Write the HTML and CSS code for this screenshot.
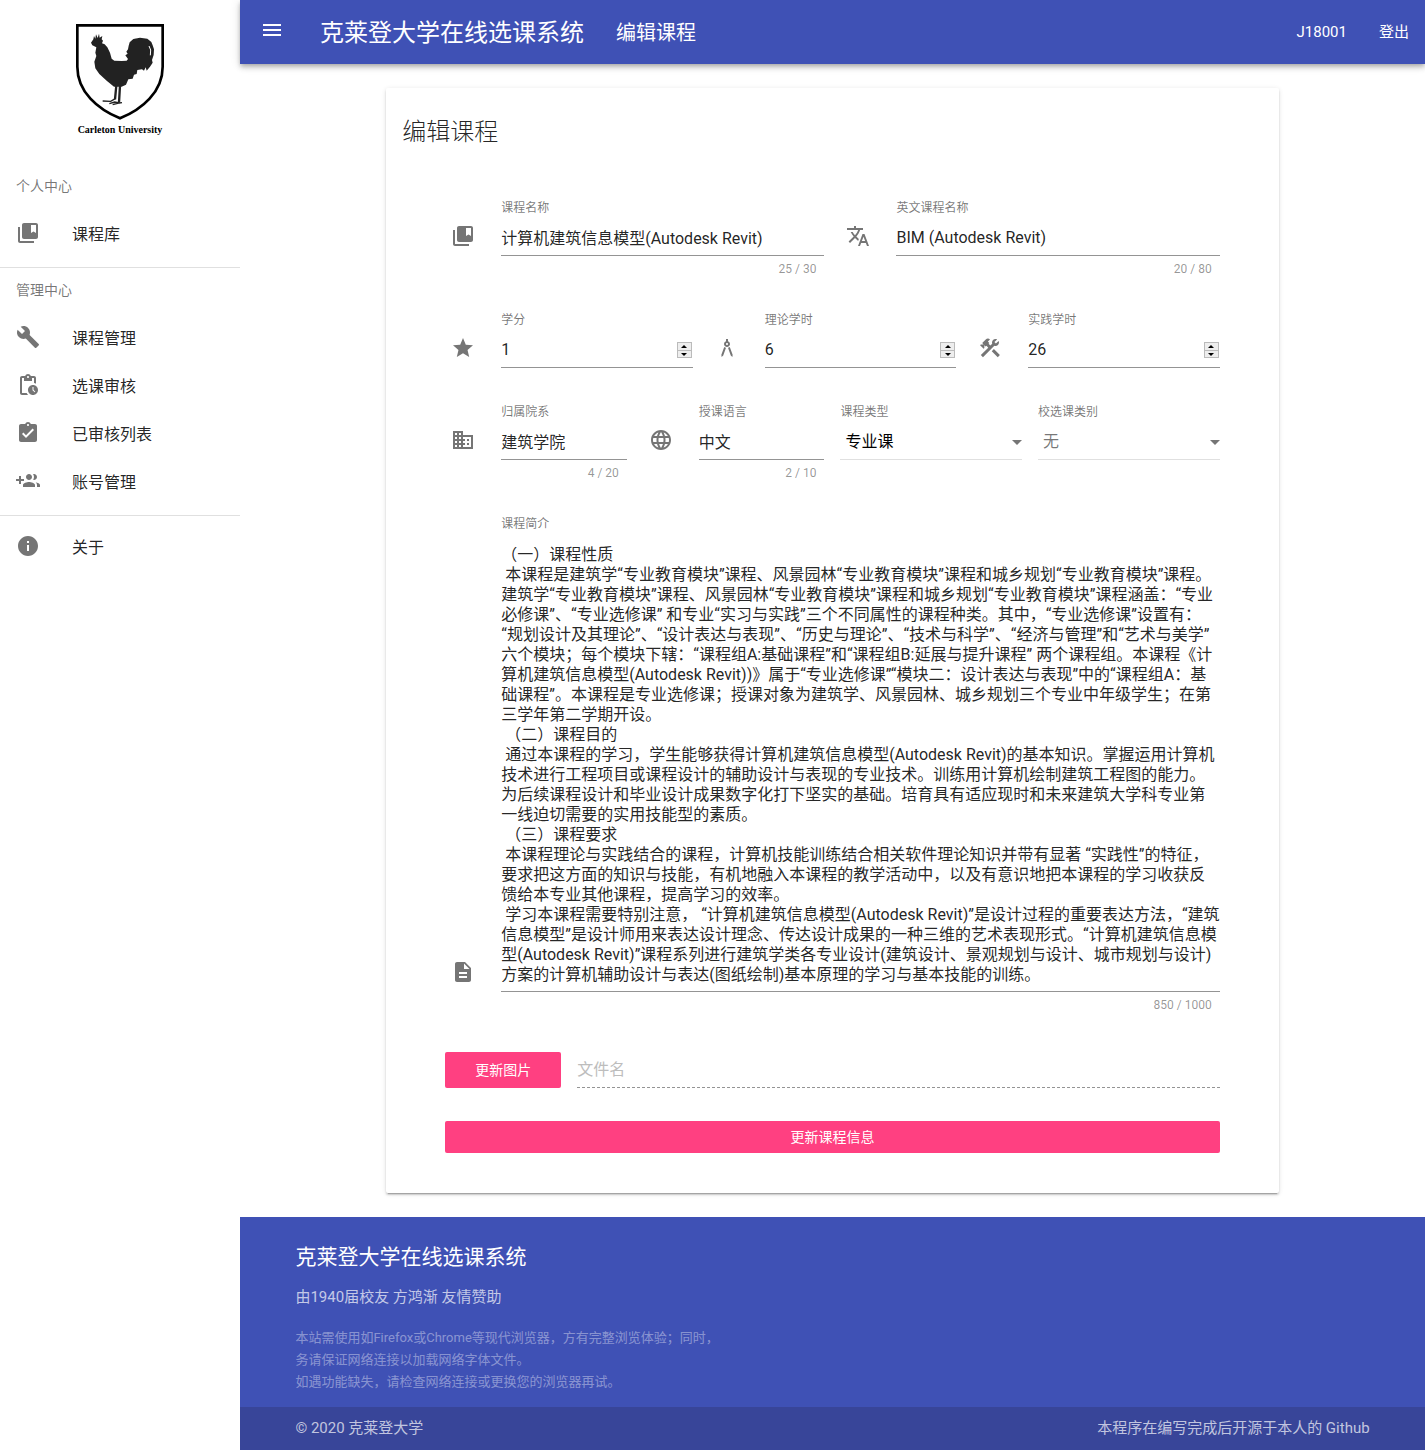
FILE: index.html
```html
<!DOCTYPE html>
<html lang="zh-CN">
<head>
<meta charset="utf-8">
<meta name="viewport" content="width=device-width, initial-scale=1">
<title>编辑课程 - 克莱登大学在线选课系统</title>
<link rel="stylesheet" href="styles.css">
</head>
<body>
<aside class="drawer">
  <div class="logo">
    <svg class="crest" viewBox="48 42 264 288" aria-hidden="true">
      <path d="M52 46H308V170C308 246 246 298 180 325 114 298 52 246 52 170Z" fill="none" stroke="#000" stroke-width="8"/>
      <path fill="#222" d="M93 98L97 92 100 88 102 78 106 86 108 73 113 84 117 71 119 83 127 78 125 88 129 92 126 100 134 103 142 112 150 128 155 146 163 152 185 153 200 152 204 147 196 136 203 131 199 125 204 118 206 107 209 97 220 87 240 83 262 86 274 96 278 106 282 118 281 135 276 150 278 158 270 170 260 182 257 172 252 182 246 178 232 180 230 192 222 194 218 206 205 208 198 224 185 230 162 230 140 212 118 192 106 175 103 155 109 138 106 128 109 112 97 106Z"/>
      <path fill="none" stroke="#222" stroke-width="7" d="M169 226L165 268M180 226L177 278"/>
      <path fill="none" stroke="#222" stroke-width="4" d="M128 273L152 274 166 266M148 281L164 276 178 279 186 278M158 284L176 279"/>
      <path fill="none" stroke="#fff" stroke-width="3" d="M267 108L272 120 271 136"/>
    </svg>
    <span class="logo-name">Carleton University</span>
  </div>
  <nav>
    <h2 class="subheader">个人中心</h2>
    <ul class="menu">
      <li><a class="menu-item" href="#"><svg class="icon" viewBox="0 0 24 24"><path d="M4 6H2v14c0 1.1.9 2 2 2h14v-2H4V6z"/><path d="M20 2H8c-1.1 0-2 .9-2 2v12c0 1.1.9 2 2 2h12c1.1 0 2-.9 2-2V4c0-1.1-.9-2-2-2zm0 10l-2.500-1.500L15 12V4h5v8z"/></svg>课程库</a></li>
    </ul>
    <h2 class="subheader divided">管理中心</h2>
    <ul class="menu">
      <li><a class="menu-item" href="#"><svg class="icon" viewBox="0 0 24 24"><path d="M22.700 19l-9.100-9.100c.9-2.300.4-5-1.500-6.900-2-2-5-2.400-7.400-1.300L9 6 6 9 1.600 4.700C.4 7.100.9 10.100 2.900 12.100c1.900 1.900 4.600 2.400 6.900 1.500l9.100 9.100c.4.4 1 .4 1.400 0l2.300-2.300c.5-.4.5-1.100.1-1.400z"/></svg>课程管理</a></li>
      <li><a class="menu-item" href="#"><svg class="icon" viewBox="0 0 24 24"><path d="M17 12c-2.760 0-5 2.240-5 5s2.240 5 5 5 5-2.240 5-5-2.240-5-5-5zm1.650 7.350L16.500 17.200V14h1v2.790l1.850 1.850-.7.710zM18 3h-3.180C14.400 1.840 13.300 1 12 1s-2.400.84-2.820 2H6c-1.100 0-2 .9-2 2v15c0 1.100.9 2 2 2h6.110c-.59-.57-1.070-1.250-1.420-2H6V5h2v3h8V5h2v5.080c.71.1 1.380.31 2 .6V5c0-1.100-.9-2-2-2zm-6 2c-.55 0-1-.45-1-1s.45-1 1-1 1 .45 1 1-.45 1-1 1z"/></svg>选课审核</a></li>
      <li><a class="menu-item" href="#"><svg class="icon" viewBox="0 0 24 24"><path d="M19 3h-4.180C14.400 1.840 13.300 1 12 1c-1.300 0-2.400.84-2.820 2H5c-1.100 0-2 .9-2 2v14c0 1.100.9 2 2 2h14c1.100 0 2-.9 2-2V5c0-1.100-.9-2-2-2zm-7 0c.55 0 1 .45 1 1s-.45 1-1 1-1-.45-1-1 .45-1 1-1zm-2 14l-4-4 1.410-1.410L10 14.170l6.590-6.590L18 9l-8 8z"/></svg>已审核列表</a></li>
      <li><a class="menu-item" href="#"><svg class="icon" viewBox="0 0 24 24"><path d="M8 10H5V7H3v3H0v2h3v3h2v-3h3v-2zm10 1c1.660 0 2.990-1.340 2.990-3S19.660 5 18 5c-.32 0-.63.05-.91.14.57.81.9 1.790.9 2.860s-.34 2.040-.9 2.860c.28.09.59.14.91.14zm-5 0c1.660 0 2.990-1.340 2.990-3S14.660 5 13 5c-1.660 0-3 1.340-3 3s1.340 3 3 3zm6.620 2.160c.83.73 1.380 1.660 1.380 2.840v2h3v-2c0-1.540-2.370-2.490-4.380-2.840zM13 13c-2 0-6 1-6 3v2h12v-2c0-2-4-3-6-3z"/></svg>账号管理</a></li>
    </ul>
    <ul class="menu divided about">
      <li><a class="menu-item" href="#"><svg class="icon" viewBox="0 0 24 24"><path d="M12 2C6.480 2 2 6.480 2 12s4.480 10 10 10 10-4.480 10-10S17.520 2 12 2zm1 15h-2v-6h2v6zm0-8h-2V7h2v2z"/></svg>关于</a></li>
    </ul>
  </nav>
</aside>

<div class="page">
  <header class="appbar">
    <button class="menu-button" type="button" aria-label="菜单"><svg class="icon" viewBox="0 0 24 24"><path d="M3 18h18v-2H3v2zm0-5h18v-2H3v2zm0-7v2h18V6H3z"/></svg></button>
    <a class="site-name" href="#">克莱登大学在线选课系统</a>
    <a class="section-name" href="#">编辑课程</a>
    <div class="account"><a href="#">J18001</a><a href="#">登出</a></div>
  </header>

  <main class="container content">
    <section class="card">
      <h1 class="card-title">编辑课程</h1>
      <form class="form">
        <div class="row two">
          <div class="field counted">
            <svg class="icon" viewBox="0 0 24 24"><path d="M4 6H2v14c0 1.100.9 2 2 2h14v-2H4V6z"/><path d="M20 2H8c-1.100 0-2 .9-2 2v12c0 1.100.9 2 2 2h12c1.100 0 2-.9 2-2V4c0-1.100-.9-2-2-2zm0 10l-2.500-1.500L15 12V4h5v8z"/></svg>
            <label for="name">课程名称</label>
            <input class="control" id="name" type="text" maxlength="30" value="计算机建筑信息模型(Autodesk Revit)">
            <span class="counter">25 / 30</span>
          </div>
          <div class="field counted">
            <svg class="icon" viewBox="0 0 24 24"><path d="M12.870 15.070l-2.540-2.510.03-.03c1.740-1.940 2.980-4.170 3.710-6.530H17V4h-7V2H8v2H1v1.990h11.170C11.500 7.920 10.440 9.750 9 11.350 8.070 10.320 7.300 9.190 6.690 8h-2c.73 1.630 1.730 3.170 2.980 4.560l-5.090 5.020L4 19l5-5 3.110 3.110.76-2.040zM18.500 10h-2L12 22h2l1.120-3h4.750L21 22h2l-4.500-12zm-2.620 7l1.620-4.330L19.120 17h-3.240z"/></svg>
            <label for="name-en">英文课程名称</label>
            <input class="control" id="name-en" type="text" maxlength="80" value="BIM (Autodesk Revit)">
            <span class="counter">20 / 80</span>
          </div>
        </div>

        <div class="row three">
          <div class="field">
            <svg class="icon" viewBox="0 0 24 24"><path d="M12 17.270L18.180 21l-1.640-7.030L22 9.240l-7.190-.61L12 2 9.190 8.630 2 9.240l5.460 4.730L5.820 21z"/></svg>
            <label for="credit">学分</label>
            <div class="control number"><input id="credit" type="number" value="1"><span class="steps"><button type="button" aria-label="增加"></button><button class="down" type="button" aria-label="减少"></button></span></div>
          </div>
          <div class="field">
            <svg class="icon" viewBox="0 0 24 24"><path d="M6.360 18.780L6.610 21l1.620-1.540 2.770-7.600c-.68-.17-1.280-.51-1.770-.98l-2.870 7.900zM14.770 10.880c-.49.47-1.100.81-1.770.98l2.770 7.600L17.390 21l.25-2.220-2.870-7.900zM15 8c0-1.300-.84-2.400-2-2.820V3h-2v2.180C9.840 5.600 9 6.700 9 8c0 1.660 1.340 3 3 3s3-1.340 3-3zm-3 1c-.55 0-1-.45-1-1s.45-1 1-1 1 .45 1 1-.45 1-1 1z"/></svg>
            <label for="theory">理论学时</label>
            <div class="control number"><input id="theory" type="number" value="6"><span class="steps"><button type="button" aria-label="增加"></button><button class="down" type="button" aria-label="减少"></button></span></div>
          </div>
          <div class="field">
            <svg class="icon" viewBox="0 0 24 24"><path d="M13.780 15.170l2.120-2.120 6 6-2.120 2.120z"/><path d="M17.500 10c1.930 0 3.500-1.570 3.500-3.500 0-.58-.16-1.120-.41-1.600l-2.700 2.700-1.490-1.490 2.700-2.700c-.48-.25-1.020-.41-1.600-.41C15.570 3 14 4.570 14 6.500c0 .41.08.8.21 1.160l-1.850 1.850-1.780-1.780.71-.71-1.410-1.410L12 3.490c-1.170-1.170-3.070-1.170-4.240 0L4.220 7.030l1.410 1.410H2.810L2.100 9.150l3.540 3.540.71-.71V9.150l1.410 1.410.71-.71 1.780 1.780-7.410 7.410 2.120 2.120L16.340 9.790c.36.13.75.21 1.160.21z"/></svg>
            <label for="practice">实践学时</label>
            <div class="control number"><input id="practice" type="number" value="26"><span class="steps"><button type="button" aria-label="增加"></button><button class="down" type="button" aria-label="减少"></button></span></div>
          </div>
        </div>

        <div class="row four">
          <div class="field counted">
            <svg class="icon" viewBox="0 0 24 24"><path d="M12 7V3H2v18h20V7H12zM6 19H4v-2h2v2zm0-4H4v-2h2v2zm0-4H4V9h2v2zm0-4H4V5h2v2zm4 12H8v-2h2v2zm0-4H8v-2h2v2zm0-4H8V9h2v2zm0-4H8V5h2v2zm10 12h-8v-2h2v-2h-2v-2h2v-2h-2V9h8v10zm-2-8h-2v2h2v-2zm0 4h-2v2h2v-2z"/></svg>
            <label for="college">归属院系</label>
            <input class="control" id="college" type="text" maxlength="20" value="建筑学院">
            <span class="counter">4 / 20</span>
          </div>
          <div class="field counted">
            <svg class="icon" viewBox="0 0 24 24"><path d="M11.990 2C6.470 2 2 6.480 2 12s4.470 10 9.990 10C17.520 22 22 17.520 22 12S17.520 2 11.990 2zm6.930 6h-2.950c-.32-1.250-.78-2.450-1.380-3.560 1.840.63 3.370 1.910 4.330 3.560zM12 4.040c.83 1.200 1.480 2.530 1.910 3.960h-3.820c.43-1.430 1.080-2.760 1.910-3.960zM4.260 14C4.100 13.360 4 12.690 4 12s.1-1.360.26-2h3.380c-.08.66-.14 1.320-.14 2s.06 1.340.14 2H4.260zm.82 2h2.950c.32 1.250.78 2.450 1.380 3.560-1.840-.63-3.370-1.900-4.330-3.560zm2.950-8H5.080c.96-1.660 2.490-2.930 4.330-3.560C8.810 5.550 8.350 6.750 8.030 8zM12 19.960c-.83-1.200-1.480-2.530-1.910-3.960h3.820c-.43 1.430-1.080 2.760-1.910 3.960zM14.340 14H9.660c-.09-.66-.16-1.320-.16-2s.07-1.350.16-2h4.680c.09.65.16 1.320.16 2s-.07 1.340-.16 2zm.25 5.560c.6-1.110 1.060-2.310 1.380-3.560h2.950c-.96 1.650-2.490 2.930-4.330 3.560zM16.360 14c.08-.66.14-1.320.14-2s-.06-1.340-.14-2h3.380c.16.64.26 1.310.26 2s-.1 1.360-.26 2h-3.380z"/></svg>
            <label for="language">授课语言</label>
            <input class="control" id="language" type="text" maxlength="10" value="中文">
            <span class="counter">2 / 10</span>
          </div>
          <div class="field choice">
            <label for="type">课程类型</label>
            <select class="control" id="type"><option>专业课</option><option>校选课</option></select>
            <svg class="arrow" viewBox="0 0 10 5"><path d="M0 0h10L5 5z"/></svg>
          </div>
          <div class="field choice">
            <label for="category">校选课类别</label>
            <select class="control" id="category" disabled><option>无</option></select>
            <svg class="arrow" viewBox="0 0 10 5"><path d="M0 0h10L5 5z"/></svg>
          </div>
        </div>

        <div class="field counted">
          <svg class="icon" viewBox="0 0 24 24"><path d="M14 2H6c-1.100 0-1.990.9-1.990 2L4 20c0 1.100.89 2 1.990 2H18c1.100 0 2-.9 2-2V8l-6-6zm2 16H8v-2h8v2zm0-4H8v-2h8v2zm-3-5V3.500L18.500 9H13z"/></svg>
          <label for="intro">课程简介</label>
          <textarea class="control" id="intro" rows="22" maxlength="1000">（一）课程性质
 本课程是建筑学“专业教育模块”课程、风景园林“专业教育模块”课程和城乡规划“专业教育模块”课程。建筑学“专业教育模块”课程、风景园林“专业教育模块”课程和城乡规划“专业教育模块”课程涵盖：“专业必修课”、“专业选修课” 和专业“实习与实践”三个不同属性的课程种类。其中，“专业选修课”设置有：“规划设计及其理论”、“设计表达与表现”、“历史与理论”、“技术与科学”、“经济与管理”和“艺术与美学”六个模块；每个模块下辖：“课程组A:基础课程”和“课程组B:延展与提升课程” 两个课程组。本课程《计算机建筑信息模型(Autodesk Revit))》属于“专业选修课”“模块二：设计表达与表现”中的“课程组A：基础课程”。本课程是专业选修课；授课对象为建筑学、风景园林、城乡规划三个专业中年级学生；在第三学年第二学期开设。
 （二）课程目的
 通过本课程的学习，学生能够获得计算机建筑信息模型(Autodesk Revit)的基本知识。掌握运用计算机技术进行工程项目或课程设计的辅助设计与表现的专业技术。训练用计算机绘制建筑工程图的能力。为后续课程设计和毕业设计成果数字化打下坚实的基础。培育具有适应现时和未来建筑大学科专业第一线迫切需要的实用技能型的素质。
 （三）课程要求
 本课程理论与实践结合的课程，计算机技能训练结合相关软件理论知识并带有显著 “实践性”的特征，要求把这方面的知识与技能，有机地融入本课程的教学活动中，以及有意识地把本课程的学习收获反馈给本专业其他课程，提高学习的效率。
 学习本课程需要特别注意， “计算机建筑信息模型(Autodesk Revit)”是设计过程的重要表达方法，“建筑信息模型”是设计师用来表达设计理念、传达设计成果的一种三维的艺术表现形式。“计算机建筑信息模型(Autodesk Revit)”课程系列进行建筑学类各专业设计(建筑设计、景观规划与设计、城市规划与设计)方案的计算机辅助设计与表达(图纸绘制)基本原理的学习与基本技能的训练。</textarea>
          <span class="counter">850 / 1000</span>
        </div>

        <div class="upload">
          <button class="button" type="button">更新图片</button>
          <input class="filename" type="text" placeholder="文件名" aria-label="文件名" disabled>
        </div>
        <button class="button submit" type="submit">更新课程信息</button>
      </form>
    </section>
  </main>

  <footer class="footer">
    <div class="container footer-main">
      <h2 class="footer-title">克莱登大学在线选课系统</h2>
      <p class="sponsor">由1940届校友 方鸿渐 友情赞助</p>
      <p class="notice">本站需使用如Firefox或Chrome等现代浏览器，方有完整浏览体验；同时，<br>务请保证网络连接以加载网络字体文件。<br>如遇功能缺失，请检查网络连接或更换您的浏览器再试。</p>
    </div>
    <div class="footer-bar">
      <div class="container footer-line"><span>© 2020 克莱登大学</span><span>本程序在编写完成后开源于本人的 <a href="#">Github</a></span></div>
    </div>
  </footer>
</div>
</body>
</html>
```
FILE: styles.css
```css
* {
  box-sizing: border-box;
}

body {
  margin: 0;
  min-height: 100vh;
  display: flex;
  background: #fff;
  color: rgba(0, 0, 0, .87);
  font: 400 16px/20px Roboto, "Noto Sans CJK SC", sans-serif;
  text-spacing-trim: space-all;
}

h1, h2, p, ul {
  margin: 0;
  padding: 0;
  font-weight: inherit;
}

ul {
  list-style: none;
}

a {
  color: inherit;
  text-decoration: none;
}

button, input, select, textarea {
  font: inherit;
  color: inherit;
  margin: 0;
  padding: 0;
  border: 0;
  border-radius: 0;
  background: none;
}

.icon {
  display: block;
  width: 24px;
  height: 24px;
  flex: none;
  fill: #757575;
}

/* Side drawer */
.drawer {
  flex: none;
  width: 240px;
}

.logo {
  display: flex;
  flex-direction: column;
  align-items: center;
  height: 162px;
  padding-top: 24px;
}

.crest {
  width: 88px;
  height: 96px;
}

.logo-name {
  color: #000;
  font: bold 10px/20px "Liberation Serif", serif;
}

.subheader {
  height: 48px;
  padding-left: 16px;
  color: rgba(0, 0, 0, .54);
  font-size: 14px;
  line-height: 48px;
}

.divided {
  margin-top: 9px;
  border-top: 1px solid rgba(0, 0, 0, .12);
}

.subheader.divided {
  height: 47px;
  line-height: 44px;
}

.about {
  padding-top: 7px;
}

.menu-item {
  display: flex;
  align-items: center;
  gap: 32px;
  height: 48px;
  padding: 2px 16px 0;
}

.menu-item .icon {
  margin-bottom: 4px;
}

/* Main column */
.page {
  flex: 1;
  min-width: 0;
  display: flex;
  flex-direction: column;
}

.container {
  width: 92%;
  margin: 0 auto;
  padding: 0 8px;
}

.appbar {
  display: flex;
  align-items: center;
  height: 64px;
  padding: 0 16px 0 20px;
  background: #3f51b5;
  color: #fff;
  box-shadow: 0 2px 4px -1px rgba(0, 0, 0, .2), 0 4px 5px rgba(0, 0, 0, .14), 0 1px 10px rgba(0, 0, 0, .12);
}

.menu-button {
  padding-bottom: 4px;
}

.menu-button .icon {
  fill: #fff;
}

.site-name,
.section-name {
  padding-top: 2px;
}

.site-name {
  margin-left: 36px;
  font-size: 24px;
}

.section-name {
  margin-left: 32px;
  font-size: 20px;
}

.account {
  display: flex;
  gap: 32px;
  margin-left: auto;
  font-size: 15px;
}

.content {
  flex: 1;
  display: grid;
  grid-template-columns: 1fr 10fr 1fr;
  padding: 24px 0;
}

.card {
  grid-column: 2;
  margin: 0 8px;
  padding: 24px 16px 40px;
  border-radius: 2px;
  box-shadow: 0 3px 1px -2px rgba(0, 0, 0, .2), 0 2px 2px rgba(0, 0, 0, .14), 0 1px 5px rgba(0, 0, 0, .12);
}

.card-title {
  font-size: 24px;
  font-weight: 300;
  line-height: 40px;
}

/* Form */
.form {
  display: flex;
  flex-direction: column;
  gap: 25px;
  padding: 47px 43px 0;
}

.row {
  display: grid;
  gap: 16px;
}

.two {
  grid-template-columns: repeat(2, 1fr);
}

.three {
  grid-template-columns: repeat(3, 1fr);
}

.four {
  grid-template-columns: repeat(4, 1fr);
}

.field {
  display: grid;
  grid-template-columns: 24px minmax(0, 1fr);
  grid-template-rows: 16px auto;
  column-gap: 26px;
  row-gap: 5px;
  align-content: start;
  padding: 0 0 10px 6px;
}

.counted {
  padding-bottom: 8px;
}

.field .icon {
  grid-area: 2 / 1;
  align-self: end;
  margin-bottom: 8px;
}

.field label {
  grid-area: 1 / 2;
  color: rgba(0, 0, 0, .54);
  font-size: 12px;
  line-height: 18px;
}

.control {
  grid-area: 2 / 2;
  display: block;
  width: 100%;
  height: 36px;
  padding: 7px 0 8px;
  border-bottom: 1px solid #949494;
  outline: 0;
}

textarea.control {
  height: auto;
  padding: 9px 0 6px;
  resize: none;
  overflow: hidden;
}

.counter {
  grid-area: 3 / 2;
  padding-right: 8px;
  color: rgba(0, 0, 0, .42);
  font-size: 12px;
  line-height: 17px;
  text-align: right;
}

.control.number {
  display: flex;
  align-items: center;
  padding: 8px 1px 7px 0;
}

.number input {
  flex: 1;
  min-width: 0;
  outline: 0;
  appearance: textfield;
}

.number input::-webkit-inner-spin-button {
  appearance: none;
  margin: 0;
}

.steps {
  display: grid;
  width: 15px;
  border: 1px solid #bbb;
}

.steps button {
  display: grid;
  place-items: center;
  height: 7px;
  background: #eee;
}

.steps .down {
  border-top: 1px solid #bbb;
}

.steps button::before {
  content: "";
  border: 3px solid transparent;
  border-top-width: 0;
  border-bottom-color: #000;
}

.steps .down::before {
  border-width: 3px 3px 0;
  border-top-color: #000;
}

.choice {
  grid-template-columns: minmax(0, 1fr);
  padding-left: 0;
}

.choice label {
  grid-area: 1 / 1;
}

.choice .control {
  grid-area: 2 / 1;
  padding: 8px 16px 7px 5px;
  border-color: #e0e0e0;
  color: #000;
  appearance: none;
}

.choice .control:disabled {
  color: rgba(0, 0, 0, .54);
  opacity: 1;
}

.arrow {
  grid-area: 2 / 1;
  place-self: center end;
  width: 10px;
  height: 5px;
  fill: #757575;
  pointer-events: none;
}

.upload {
  display: flex;
  gap: 16px;
  padding: 5px 0 8px;
}

.button {
  height: 36px;
  padding: 0 30px;
  border-radius: 2px;
  background: #ff4081;
  color: #fff;
  font-size: 14px;
}

.submit {
  height: 32px;
}

.filename {
  flex: 1;
  min-width: 0;
  height: 36px;
  border-bottom: 1px dashed #949494;
}

.filename::placeholder {
  color: #bdbdbd;
  opacity: 1;
}

/* Footer */
.footer {
  background: #3f51b5;
  color: rgba(255, 255, 255, .7);
  font-size: 15px;
}

.footer-main {
  padding-top: 24px;
  padding-bottom: 14px;
}

.footer-title {
  color: #fff;
  font-size: 21px;
  line-height: 32px;
}

.sponsor {
  margin: 14px 0 20px;
}

.notice {
  color: rgba(255, 255, 255, .4);
  font-size: 13px;
  line-height: 22px;
}

.footer-bar {
  background: #384599;
}

.footer-line {
  display: flex;
  justify-content: space-between;
  line-height: 43px;
}
```
